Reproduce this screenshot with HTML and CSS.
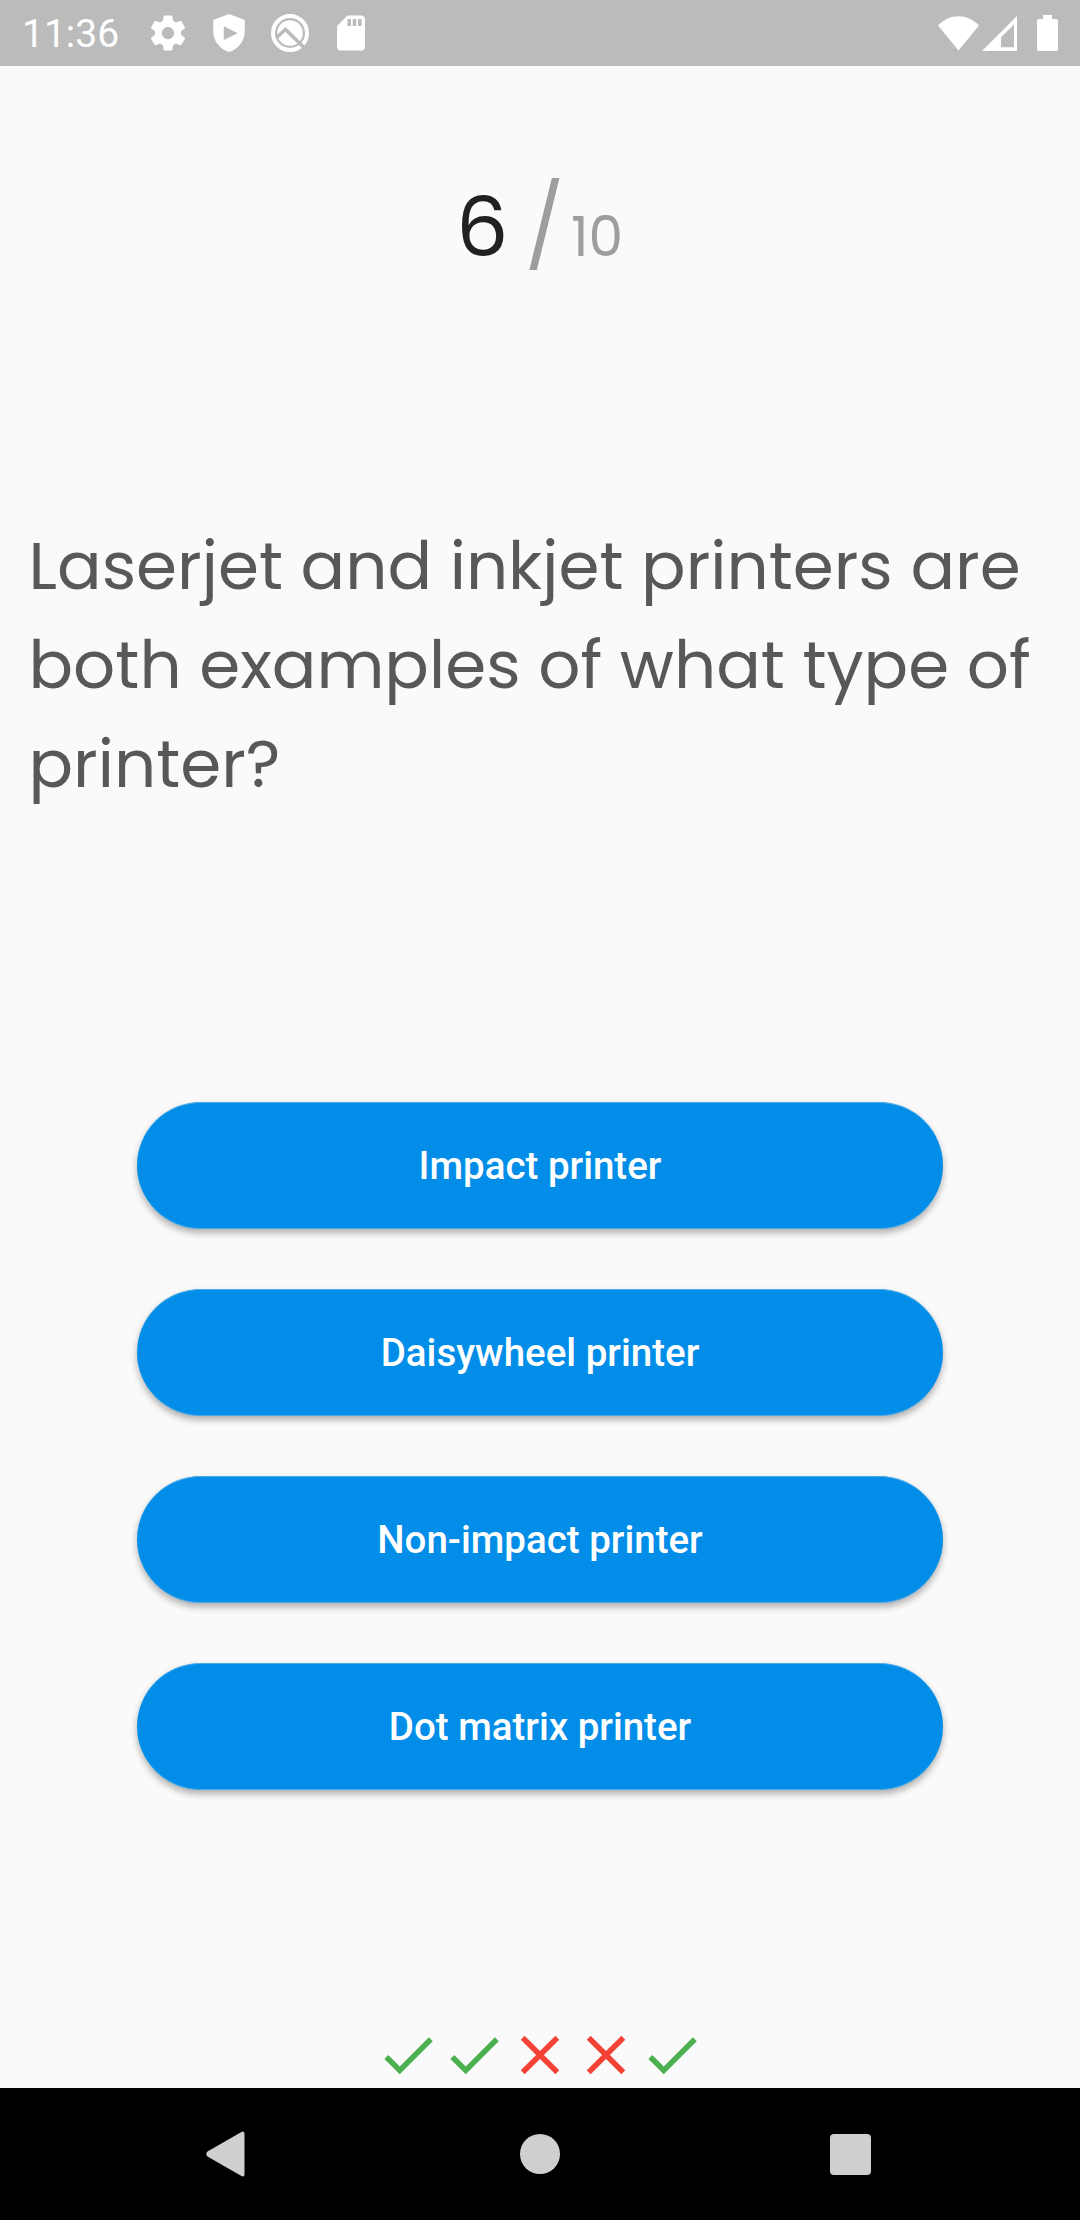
FILE: index.html
```html
<!DOCTYPE html>
<html lang="en">
<head>
<meta charset="utf-8">
<title>Quiz</title>
<link rel="stylesheet" href="styles.css">
</head>
<body>
<div class="screen">
  <header class="status">
    <span class="clock">11:36</span>
    <div class="notices">
      <svg class="ic" viewBox="0 0 24 24"><path d="M19.43 12.98c.04-.32.07-.64.07-.98s-.03-.66-.07-.98l2.11-1.65c.19-.15.24-.42.12-.64l-2-3.46c-.12-.22-.39-.3-.61-.22l-2.49 1c-.52-.4-1.08-.73-1.69-.98l-.38-2.65C14.46 2.18 14.25 2 14 2h-4c-.25 0-.46.18-.49.42l-.38 2.65c-.61.25-1.17.59-1.69.98l-2.49-1c-.23-.09-.49 0-.61.22l-2 3.46c-.13.22-.07.49.12.64l2.11 1.65c-.04.32-.07.65-.07.98s.03.66.07.98l-2.11 1.65c-.19.15-.24.42-.12.64l2 3.46c.12.22.39.3.61.22l2.49-1c.52.4 1.08.73 1.69.98l.38 2.65c.03.24.24.42.49.42h4c.25 0 .46-.18.49-.42l.38-2.65c.61-.25 1.17-.59 1.69-.98l2.49 1c.23.09.49 0 .61-.22l2-3.46c.12-.22.07-.49-.12-.64l-2.11-1.65zM12 15.5c-1.93 0-3.5-1.57-3.5-3.5s1.57-3.5 3.5-3.5 3.5 1.57 3.5 3.5-1.57 3.5-3.5 3.5z"/></svg>
      <svg class="ic" viewBox="0 0 24 24"><path fill-rule="evenodd" d="M12 1.2L3 4.6v6.6c0 5.5 3.8 10.1 9 11.700 5.200-1.600 9-6.200 9-11.700V4.600zM9 8.200l8 3.900-8 3.900z"/></svg>
      <svg class="ic" viewBox="0 0 42 42"><circle class="ring" cx="21" cy="21" r="17"/><circle cx="21" cy="21" r="12.800"/><path class="cut" d="M7.500 25.500L16.500 17.500 37 37.500"/></svg>
      <svg class="ic" viewBox="0 0 24 24"><path d="M18 2h-8L4.020 8 4 20c0 1.100.9 2 2 2h12c1.100 0 2-.9 2-2V4c0-1.100-.9-2-2-2zm-6 6h-2V4h2v4zm3 0h-2V4h2v4zm3 0h-2V4h2v4z"/></svg>
    </div>
    <div class="system">
      <svg class="wifi" viewBox="0 0 41 35"><path d="M0 9.500C12-2.800 29-2.800 41 9.500L20.500 34.500z"/></svg>
      <svg class="signal" viewBox="0 0 35 35"><path fill-rule="evenodd" d="M35 0v35H0zM32 8.500L19 21.200V31.300H32z"/></svg>
      <svg class="battery" viewBox="0 0 21 36"><path d="M6 0h9v4h4q2 0 2 2v28q0 2-2 2H2q-2 0-2-2V6q0-2 2-2h4z"/></svg>
    </div>
  </header>

  <main class="quiz">
    <div class="counter"><span class="now">6</span><span class="slash">/</span><span class="total">10</span></div>

    <p class="question">Laserjet and inkjet printers are<br>both examples of what type of<br>printer?</p>

    <div class="answers">
      <button class="answer">Impact printer</button>
      <button class="answer">Daisywheel printer</button>
      <button class="answer">Non-impact printer</button>
      <button class="answer">Dot matrix printer</button>
    </div>

    <div class="score">
      <svg class="mark right" viewBox="0 0 24 24"><path d="M9 16.170L4.830 12l-1.420 1.410L9 19 21 7l-1.410-1.410z"/></svg>
      <svg class="mark right" viewBox="0 0 24 24"><path d="M9 16.170L4.830 12l-1.420 1.410L9 19 21 7l-1.410-1.410z"/></svg>
      <svg class="mark wrong" viewBox="0 0 24 24"><path d="M19 6.410L17.590 5 12 10.590 6.410 5 5 6.410 10.590 12 5 17.590 6.410 19 12 13.410 17.590 19 19 17.590 13.410 12z"/></svg>
      <svg class="mark wrong" viewBox="0 0 24 24"><path d="M19 6.410L17.590 5 12 10.590 6.410 5 5 6.410 10.590 12 5 17.590 6.410 19 12 13.410 17.590 19 19 17.590 13.410 12z"/></svg>
      <svg class="mark right" viewBox="0 0 24 24"><path d="M9 16.170L4.830 12l-1.420 1.410L9 19 21 7l-1.410-1.410z"/></svg>
    </div>
  </main>

  <nav class="navbar">
    <svg class="back" viewBox="0 0 39 46"><path d="M35 1.200Q38.500-1 38.500 3V43Q38.500 47 35 44.800L1.500 25.500Q-1 23 1.500 20.500z"/></svg>
    <span class="home"></span>
    <span class="recent"></span>
  </nav>
</div>
</body>
</html>
```
FILE: styles.css
```css
* { box-sizing: border-box; }
body { margin: 0; background: #fafafa; }
svg { display: block; fill: #fff; flex: none; }

.screen {
  width: 1080px;
  height: 2220px;
  display: flex;
  flex-direction: column;
  background: #fafafa;
  font-family: Roboto, sans-serif;
}

.status {
  height: 66px;
  flex: none;
  display: flex;
  align-items: center;
  padding: 0 22px;
  background: #bbb;
  color: #fff;
}
.clock { width: 125px; font-size: 39px; line-height: 66px; padding-top: 2px; }
.notices { display: flex; gap: 19px; }
.ic { width: 42px; height: 42px; }
.ring { fill: none; stroke: #fff; stroke-width: 4; }
.cut { fill: none; stroke: #bbb; stroke-width: 3.5; }
.system { display: flex; align-items: center; margin-left: auto; }
.wifi { width: 41px; height: 35px; margin-right: 3px; }
.signal { width: 35px; height: 35px; margin-right: 20px; }
.battery { width: 21px; height: 36px; }

.quiz {
  height: 2022px;
  flex: none;
  display: flex;
  flex-direction: column;
  align-items: center;
}

.counter {
  height: 126px;
  margin-top: 98px;
  width: 168px;
  display: flex;
  align-items: baseline;
  font-family: Poppins, Inter, sans-serif;
  color: #9e9e9e;
  line-height: 126px;
}
.now { width: 69px; font-size: 82.5px; color: #212121; }
.slash { width: 46px; font-size: 82.5px; }
.total { font-size: 55px; }

.question {
  width: 1023px;
  margin: 227px 0 0;
  font-family: Poppins, Inter, sans-serif;
  font-size: 66px;
  line-height: 99px;
  white-space: nowrap;
  color: #585858;
}

.answers { display: grid; gap: 60px; margin-top: 288px; }
.answer {
  width: 806px;
  height: 127px;
  border: 0 solid #4dabea;
  border-width: 1px 0;
  border-radius: 64px;
  padding: 0;
  background: #028ee8;
  color: #fff;
  font: 500 38.5px/46px Roboto, sans-serif;
  box-shadow: 0 4px 7px rgba(0, 0, 0, .3);
}

.score { display: flex; margin-top: auto; }
.mark { width: 66px; height: 66px; }
.right { fill: #4caf50; }
.wrong { fill: #f44336; }

.navbar {
  height: 132px;
  flex: none;
  display: grid;
  grid-template-columns: 314px 310px 41px;
  align-items: center;
  padding-left: 206px;
  background: #000;
}
.back { width: 39px; height: 46px; fill: #cfcfcf; }
.home { width: 40px; height: 40px; border-radius: 50%; background: #cfcfcf; }
.recent { width: 41px; height: 41px; border-radius: 4px; background: #cfcfcf; }
```
